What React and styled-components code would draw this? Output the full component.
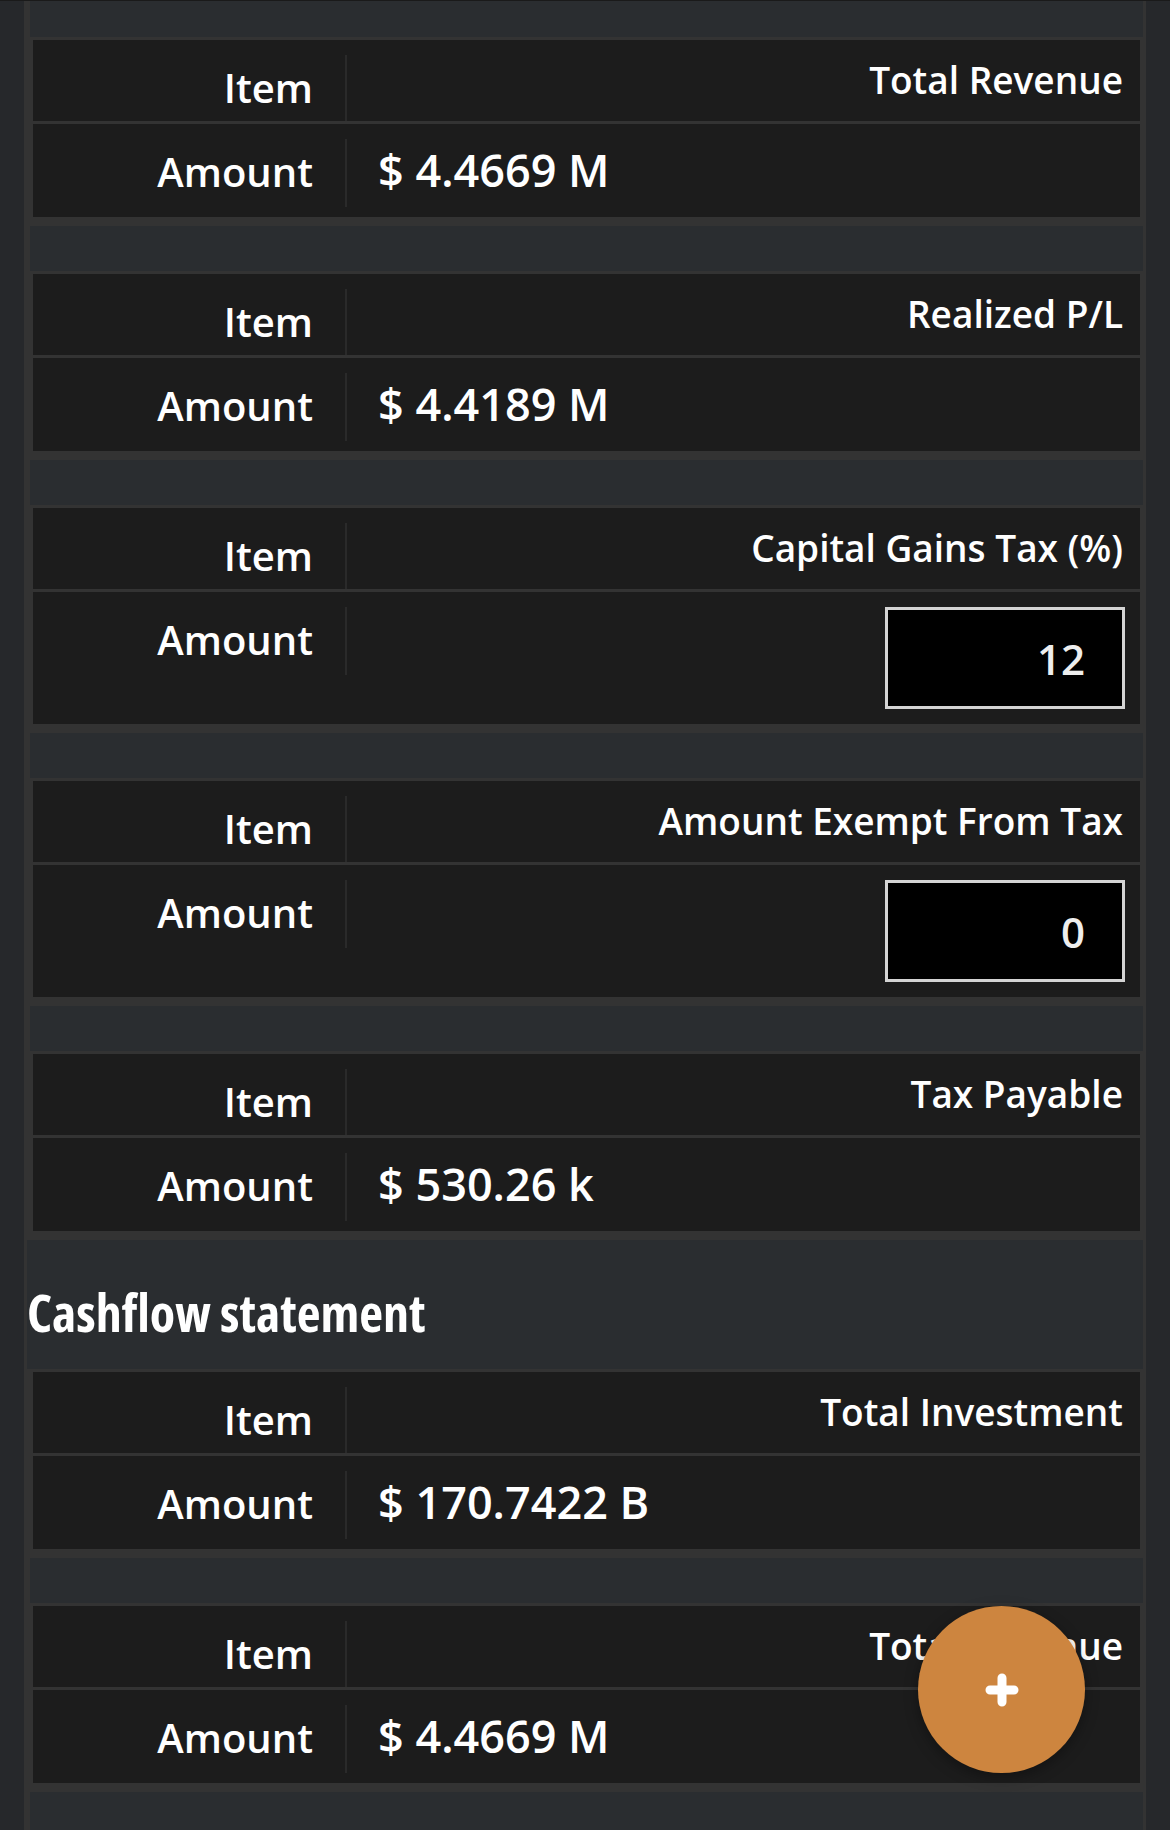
import React from "react";
import styled, { createGlobalStyle } from "styled-components";

const GlobalStyle = createGlobalStyle`
  * {
    box-sizing: border-box;
  }
  body {
    margin: 0;
    background: #26282b;
    font-family: "Open Sans", "Liberation Sans", sans-serif;
    color: #fff;
  }
`;

const Page = styled.div`
  border-top: 1px solid #1a1a1a;
  min-height: 1830px;
`;

const Panel = styled.main`
  margin: 0 24px;
  border-left: 6px solid #333;
  border-right: 3px solid #333;
  background: #2a2d30;
  padding: 36px 0 45px;
  min-height: 1829px;
`;

const Stack = styled.div`
  display: flex;
  flex-direction: column;
  gap: 45px;
`;

const Card = styled.section`
  background: #333;
  padding: 3px 3px 9px;
  display: flex;
  flex-direction: column;
  gap: 3px;
`;

const Row = styled.div`
  display: flex;
  align-items: flex-start;
  background: #1c1c1c;
  min-height: ${(props) => (props.$head ? "81px" : "93px")};
`;

const Label = styled.div`
  flex: none;
  width: 314px;
  height: ${(props) => (props.$head ? "66px" : "68px")};
  margin-top: 15px;
  padding: 6px 32px 0 0;
  border-right: 2px solid #2a2a2a;
  text-align: right;
  font-size: 40px;
  font-weight: 600;
  line-height: 53px;
`;

const Title = styled.div`
  flex: 1;
  padding: 13px 17px 0;
  text-align: right;
  font-size: 37px;
  font-weight: 600;
  line-height: 53px;
`;

const Value = styled.div`
  flex: 1;
  padding: 15px 17px 0 31px;
  font-size: 45px;
  font-weight: 600;
  line-height: 61px;
`;

const InputCell = styled.div`
  flex: 1;
  display: flex;
  justify-content: flex-end;
  padding: 15px;
`;

const NumberInput = styled.input`
  width: 240px;
  height: 102px;
  border: 3px solid #d4d4d4;
  background: #000;
  color: #eee;
  font-family: "Open Sans", "Liberation Sans", sans-serif;
  font-size: 42px;
  font-weight: 600;
  text-align: right;
  padding: 0 37px 0 10px;
  outline: none;
  border-radius: 0;
`;

const Heading = styled.h2`
  margin: 0 0 0 -3px;
  padding: 36px 0 21px;
  background: #2a2d30;
  font-size: 52px;
  font-weight: 700;
  font-stretch: 75%;
  line-height: 72px;
  color: #fff;
`;

const Fab = styled.button`
  position: fixed;
  right: 85px;
  bottom: 57px;
  width: 167px;
  height: 167px;
  border: none;
  border-radius: 50%;
  background: #cd853f;
  box-shadow: 0 4px 14px rgba(0, 0, 0, 0.35);
  display: flex;
  align-items: center;
  justify-content: center;
  padding: 0;
  cursor: pointer;
`;

const income = [
  { title: "Total Revenue", value: "$ 4.4669 M" },
  { title: "Realized P/L", value: "$ 4.4189 M" },
  { title: "Capital Gains Tax (%)", input: "12" },
  { title: "Amount Exempt From Tax", input: "0" },
  { title: "Tax Payable", value: "$ 530.26 k" },
];

const cashflow = [
  { title: "Total Investment", value: "$ 170.7422 B" },
  { title: "Total Revenue", value: "$ 4.4669 M" },
];

function StatementCard({ title, value, input }) {
  return (
    <Card>
      <Row $head>
        <Label $head>Item</Label>
        <Title>{title}</Title>
      </Row>
      <Row>
        <Label>Amount</Label>
        {input !== undefined ? (
          <InputCell>
            <NumberInput type="text" defaultValue={input} />
          </InputCell>
        ) : (
          <Value>{value}</Value>
        )}
      </Row>
    </Card>
  );
}

function PlusIcon() {
  return (
    <svg width="34" height="34" viewBox="0 0 34 34">
      <path
        d="M17 5v24M5 17h24"
        stroke="#fff"
        strokeWidth="9"
        strokeLinecap="round"
        fill="none"
      />
    </svg>
  );
}

export default function App() {
  return (
    <Page>
      <GlobalStyle />
      <Panel>
        <Stack>
          {income.map((item) => (
            <StatementCard key={item.title} {...item} />
          ))}
        </Stack>
        <Heading>Cashflow statement</Heading>
        <Stack>
          {cashflow.map((item) => (
            <StatementCard key={item.title} {...item} />
          ))}
        </Stack>
      </Panel>
      <Fab aria-label="Add">
        <PlusIcon />
      </Fab>
    </Page>
  );
}
